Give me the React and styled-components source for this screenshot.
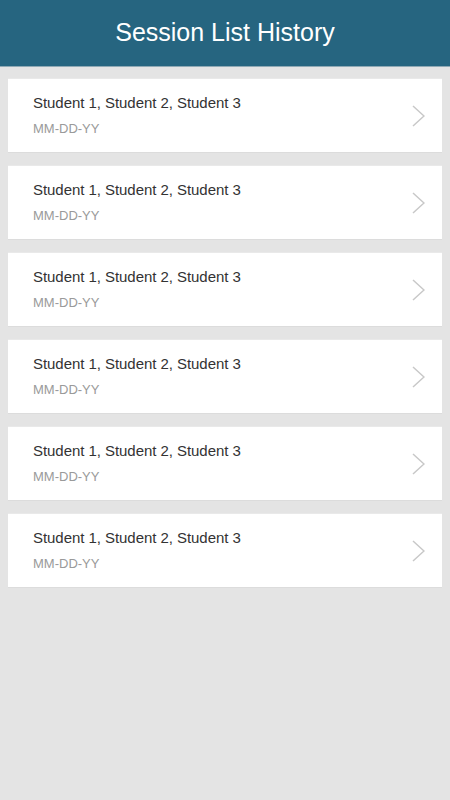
import React from "react";
import styled, { createGlobalStyle } from "styled-components";

const Global = createGlobalStyle`
  html, body { margin: 0; padding: 0; }
  body {
    background: #e4e4e4;
    font-family: "Liberation Sans", Arial, Helvetica, sans-serif;
  }
`;

const Page = styled.div`
  min-height: 800px;
  background: #e4e4e4;
`;

const Header = styled.header`
  height: 66px;
  background: #266580;
  border-bottom: 1px solid #8fa9b5;
  display: flex;
  align-items: center;
  justify-content: center;
`;

const Title = styled.h1`
  margin: 0;
  color: #ffffff;
  font-size: 25px;
  font-weight: 400;
  line-height: 30px;
  transform: translateY(-1px);
`;

const List = styled.ul`
  list-style: none;
  margin: 0;
  padding: 11px 8px;
  display: flex;
  flex-direction: column;
  gap: 12px;
`;

const Card = styled.li`
  height: 75px;
  box-sizing: border-box;
  background: #ffffff;
  border-top: 1px solid #e9e9e9;
  border-bottom: 1px solid #dcdcdc;
  display: flex;
  align-items: center;
  justify-content: space-between;
  padding: 0 17px 0 25px;
`;

const Info = styled.div`
  display: flex;
  flex-direction: column;
  gap: 9px;
`;

const Names = styled.div`
  font-size: 15px;
  line-height: 18px;
  color: #333333;
  letter-spacing: -0.05px;
`;

const DateText = styled.div`
  font-size: 13px;
  line-height: 16px;
  color: #9a9a9a;
`;

const Chevron = () => (
  <svg width="13" height="22" viewBox="0 0 13 22" aria-hidden="true">
    <polyline
      points="1,1 12,11 1,21"
      fill="none"
      stroke="#c8c8c8"
      strokeWidth="1.5"
    />
  </svg>
);

const sessions = Array.from({ length: 6 }, (_, i) => ({
  id: i,
  names: "Student 1, Student 2, Student 3",
  date: "MM-DD-YY",
}));

export default function App() {
  return (
    <Page>
      <Global />
      <Header>
        <Title>Session List History</Title>
      </Header>
      <List>
        {sessions.map((s) => (
          <Card key={s.id}>
            <Info>
              <Names>{s.names}</Names>
              <DateText>{s.date}</DateText>
            </Info>
            <Chevron />
          </Card>
        ))}
      </List>
    </Page>
  );
}
